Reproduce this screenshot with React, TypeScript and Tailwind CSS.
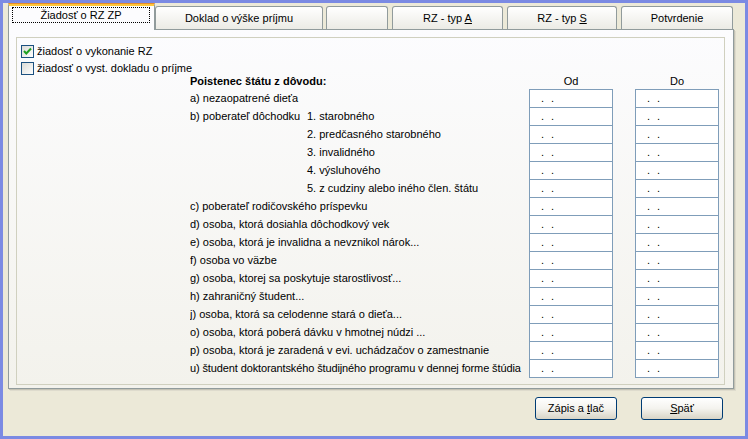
import React from "react";

const rows: { main?: string; sub?: string; tight?: boolean }[] = [
  { main: "a) nezaopatrené dieťa" },
  { main: "b) poberateľ dôchodku", sub: "1. starobného" },
  { sub: "2. predčasného starobného" },
  { sub: "3. invalidného" },
  { sub: "4. výsluhového" },
  { sub: "5. z cudziny alebo iného člen. štátu" },
  { main: "c) poberateľ rodičovského príspevku" },
  { main: "d) osoba, ktorá dosiahla dôchodkový vek" },
  { main: "e) osoba, ktorá je invalidna a nevznikol nárok..." },
  { main: "f) osoba vo väzbe" },
  { main: "g) osoba, ktorej sa poskytuje starostlivosť..." },
  { main: "h) zahraničný študent..." },
  { main: "j) osoba, ktorá sa celodenne stará o dieťa..." },
  { main: "o) osoba, ktorá poberá dávku v hmotnej núdzi ..." },
  { main: "p) osoba, ktorá je zaradená v evi. uchádzačov o zamestnanie" },
  { main: "u) študent doktorantského študijného programu v dennej forme štúdia", tight: true },
];

function Checkbox({ checked }: { checked?: boolean }) {
  return (
    <div className="w-[13px] h-[13px] border border-[#1c5180] bg-linear-to-br from-[#dcdcd7] to-white flex items-center justify-center shrink-0">
      {checked && (
        <svg width="11" height="11" viewBox="0 0 11 11">
          <path d="M2 5 L4.3 7.5 L9 2.5" fill="none" stroke="#21a121" strokeWidth="2" />
        </svg>
      )}
    </div>
  );
}

function DateBox() {
  return (
    <div className="w-[84px] h-[19px] border border-[#7f9db9] bg-white leading-[17px] shrink-0">
      <span className="pl-[11px] tracking-[7px]">..</span>
    </div>
  );
}

function InactiveTab({ w, children, className = "" }: { w: string; children?: React.ReactNode; className?: string }) {
  return (
    <div
      className={`${w} ${className} h-[23px] border border-b-0 border-[#919b9c] rounded-t-[3px] bg-linear-to-b from-white to-[#ecebe5] flex items-center justify-center pt-[1px]`}
    >
      {children}
    </div>
  );
}

function Button({ children }: { children: React.ReactNode }) {
  return (
    <div className="w-[82px] h-[23px] border border-[#003c74] rounded-[3px] bg-linear-to-b from-white via-[#f4f3ee] to-[#d8d4c6] flex items-center justify-center">
      {children}
    </div>
  );
}

export default function App() {
  return (
    <div className="w-[748px] h-[439px] border-[3px] border-[#7b8ae3] bg-[#ece9d8] flex flex-col font-['Liberation_Sans',Arial,sans-serif] text-[11px] text-black overflow-hidden">
      {/* tabs */}
      <div className="flex items-end h-[26px] pl-[5px]">
        <div className="w-[147px] h-[27px] mb-[-1px] relative z-10 bg-[#fcfcfe] border-x border-[#919b9c] rounded-t-[3px] flex flex-col">
          <div className="h-[1px] bg-[#e68b2c] rounded-t-[3px] -mx-px" />
          <div className="h-[2px] bg-[#ffc73c]" />
          <div className="pl-[3px] pt-[1px]">
            <div className="w-[138px] h-[16px] border border-dotted border-black flex items-center justify-center">
              Žiadosť o RZ ZP
            </div>
          </div>
        </div>
        <InactiveTab w="w-[168px]">Doklad o výške príjmu</InactiveTab>
        <InactiveTab w="w-[62px]" className="ml-[3px]" />
        <InactiveTab w="w-[111px]" className="ml-[4px]">
          <span>
            RZ - typ <span className="underline">A</span>
          </span>
        </InactiveTab>
        <InactiveTab w="w-[110px]" className="ml-[4px]">
          <span>
            RZ - typ <span className="underline">S</span>
          </span>
        </InactiveTab>
        <InactiveTab w="w-[112px]" className="ml-[4px]">Potvrdenie</InactiveTab>
      </div>

      {/* panel */}
      <div className="ml-[5px] w-[726px] h-[360px] border border-[#919b9c] bg-linear-to-b from-[#fcfcfe] to-[#f3f2ec] shadow-[1px_1px_0_#c4c2b4,2px_2px_0_#dedbcd] pt-[7px] pl-[7px]">
        <div className="w-[709px] h-[348px] border border-[#d0d0bf]">
          <div className="pl-[4px] pt-[7px]">
            <div className="flex items-center h-[13px]">
              <Checkbox checked />
              <span className="ml-[3px]">žiadosť o vykonanie RZ</span>
            </div>
            <div className="flex items-center h-[13px] mt-[4px]">
              <Checkbox />
              <span className="ml-[3px]">žiadosť o vyst. dokladu o príjme</span>
            </div>
          </div>

          <div className="pl-[173px] mt-[-2px]">
            <div className="flex h-[16px] items-center">
              <div className="w-[339px] font-bold">Poistenec štátu z dôvodu:</div>
              <div className="w-[84px] text-center">Od</div>
              <div className="w-[22px]" />
              <div className="w-[84px] text-center">Do</div>
            </div>
            {rows.map((r, i) => (
              <div key={i} className="flex h-[18px]">
                <div
                  className={`w-[339px] flex leading-[18px] whitespace-nowrap overflow-hidden ${
                    r.tight ? "tracking-[-0.12px]" : ""
                  }`}
                >
                  {r.main ? (
                    <>
                      <span className={r.sub ? "w-[117px]" : ""}>{r.main}</span>
                      {r.sub && <span>{r.sub}</span>}
                    </>
                  ) : (
                    <span className="pl-[117px]">{r.sub}</span>
                  )}
                </div>
                <DateBox />
                <div className="w-[22px] shrink-0" />
                <DateBox />
              </div>
            ))}
          </div>
        </div>
      </div>

      {/* buttons */}
      <div className="flex justify-end gap-[24px] pr-[22px] mt-[8px]">
        <Button>
          <span>
            Zápis a <span className="underline">t</span>lač
          </span>
        </Button>
        <Button>
          <span>
            <span className="underline">S</span>päť
          </span>
        </Button>
      </div>
    </div>
  );
}
